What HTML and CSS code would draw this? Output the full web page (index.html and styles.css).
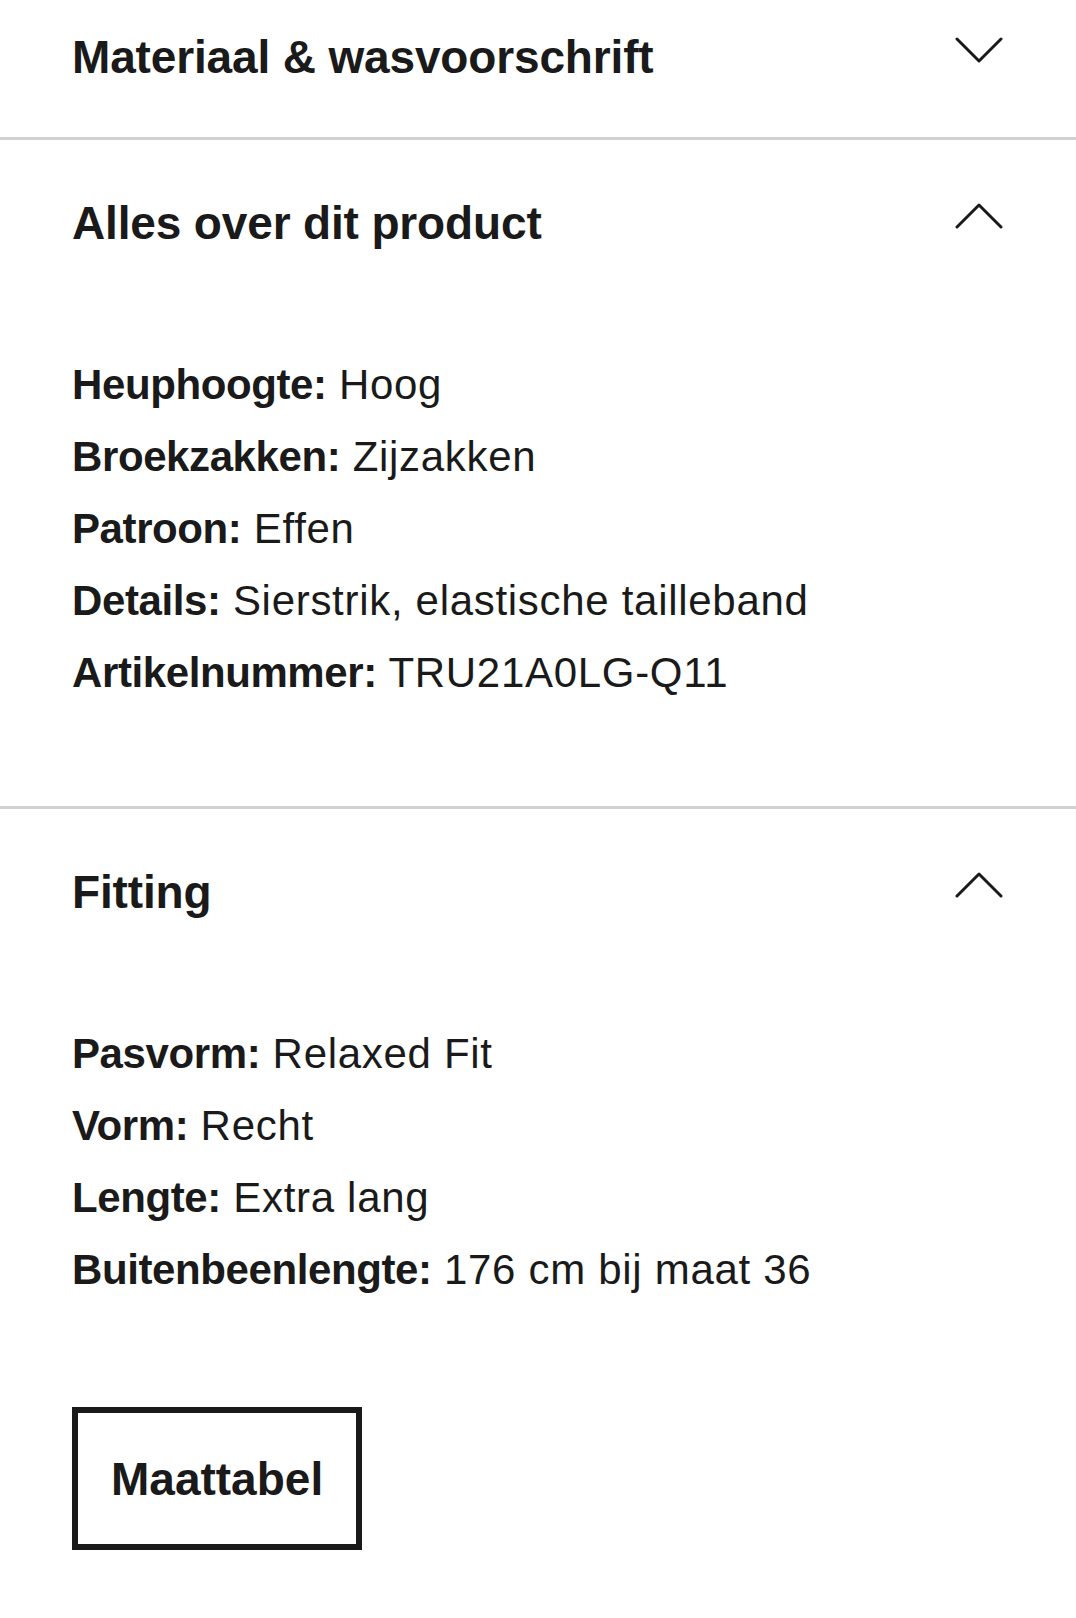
FILE: index.html
```html
<!DOCTYPE html>
<html lang="nl">
<head>
    <meta charset="UTF-8">
    <meta name="viewport" content="width=device-width, initial-scale=1.0">
    <title>Productinformatie</title>
    <link rel="stylesheet" href="styles.css">
</head>
<body>
    <!-- Ingeklapte sectie -->
    <section class="section">
        <div class="section-header first">
            <h2>Materiaal &amp; wasvoorschrift</h2>
            <svg class="chevron" width="48" height="48" viewBox="0 0 48 48"><path d="M2 14 L24 36 L46 14"/></svg>
        </div>
    </section>

    <section class="section">
        <div class="section-header">
            <h2>Alles over dit product</h2>
            <svg class="chevron" width="48" height="48" viewBox="0 0 48 48"><path d="M2 36 L24 14 L46 36"/></svg>
        </div>
        <div class="section-body">
            <p><b>Heuphoogte:</b> Hoog</p>
            <p><b>Broekzakken:</b> Zijzakken</p>
            <p><b>Patroon:</b> Effen</p>
            <p><b>Details:</b> Sierstrik, elastische tailleband</p>
            <p><b>Artikelnummer:</b> TRU21A0LG-Q11</p>
        </div>
    </section>

    <section class="section last">
        <div class="section-header">
            <h2>Fitting</h2>
            <svg class="chevron" width="48" height="48" viewBox="0 0 48 48"><path d="M2 36 L24 14 L46 36"/></svg>
        </div>
        <div class="section-body">
            <p><b>Pasvorm:</b> Relaxed Fit</p>
            <p><b>Vorm:</b> Recht</p>
            <p><b>Lengte:</b> Extra lang</p>
            <p><b>Buitenbeenlengte:</b> 176 cm bij maat 36</p>
        </div>
        <button class="size-btn">Maattabel</button>
    </section>
</body>
</html>
```

FILE: styles.css
```css
body {
    margin: 0;
    background-color: #fff;
    color: #1a1a1a;
    font-family: "Liberation Sans", Arial, sans-serif;
}

/* Secties met scheidingslijn */
.section {
    border-bottom: 3px solid #d2d2d2;
}
.section.last {
    border-bottom: none;
    padding-bottom: 69px;
}

.section-header {
    display: flex;
    justify-content: space-between;
    align-items: flex-start;
    padding: 55px 73px 52px 72px;
}
.section-header.first {
    padding-top: 29px;
}
.section-header h2 {
    margin: 0;
    font-size: 46px;
    line-height: 56px;
    font-weight: bold;
    letter-spacing: -0.15px;
}

.chevron {
    margin-top: -4px;
    fill: none;
    stroke: #1a1a1a;
    stroke-width: 3;
    stroke-linecap: round;
    stroke-linejoin: round;
}

/* Inhoud */
.section-body {
    padding: 46px 72px 97px;
}
.section-body p {
    margin: 0;
    font-size: 42px;
    line-height: 72px;
    letter-spacing: 0.7px;
}
.section-body b {
    letter-spacing: -0.4px;
}

/* Knop maattabel */
.size-btn {
    display: inline-flex;
    align-items: center;
    height: 143px;
    margin: 4px 0 0 72px;
    padding: 0 33px;
    border: 6px solid #1a1a1a;
    background-color: #fff;
    color: #1a1a1a;
    font-family: inherit;
    font-size: 46px;
    font-weight: bold;
    cursor: pointer;
}
```
